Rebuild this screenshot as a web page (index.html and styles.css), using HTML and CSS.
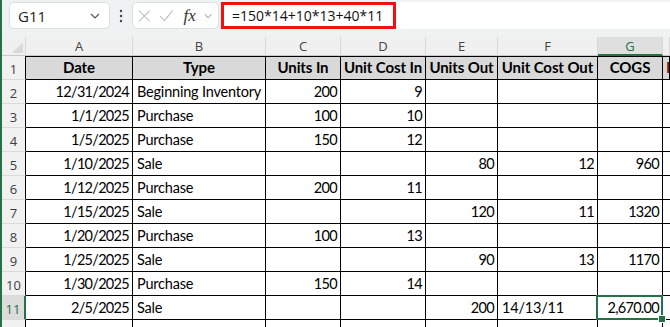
FILE: index.html
```html
<!DOCTYPE html>
<html lang="en">
<head>
    <meta charset="UTF-8">
    <meta name="viewport" content="width=device-width, initial-scale=1.0">
    <title>FIFO COGS</title>
    <link rel="stylesheet" href="styles.css">
</head>
<body>
    <div class="window">
        <div class="toolbar">
            <div class="namebox">
                <span>G11</span>
                <svg class="chev" width="10" height="6" viewBox="0 0 10 6"><path d="M1 1l4 4 4-4" fill="none" stroke="#555" stroke-width="1.2"/></svg>
            </div>
            <svg class="dots" width="4" height="14" viewBox="0 0 4 14"><circle cx="2" cy="2" r="1.2" fill="#444"/><circle cx="2" cy="7" r="1.2" fill="#444"/><circle cx="2" cy="12" r="1.2" fill="#444"/></svg>
            <div class="fxbox">
                <svg width="14" height="14" viewBox="0 0 14 14"><path d="M1 1l12 12M13 1L1 13" stroke="#b5b5b5" stroke-width="1.1"/></svg>
                <svg width="16" height="14" viewBox="0 0 16 14"><path d="M1 7l5 5L15 1" fill="none" stroke="#b5b5b5" stroke-width="1.1"/></svg>
                <span class="fx">fx</span>
                <svg class="chev" width="9" height="6" viewBox="0 0 10 6"><path d="M1 1l4 4 4-4" fill="none" stroke="#888" stroke-width="1.2"/></svg>
            </div>
            <div class="formula">
                <span class="mark">=150*14+10*13+40*11</span>
            </div>
        </div>

        <div class="row colheads">
            <div class="corner"><span class="tri"></span></div>
            <div>A</div><div>B</div><div>C</div><div>D</div><div>E</div><div>F</div>
            <div class="active">G</div><div></div>
        </div>

        <div class="row head">
            <div class="rh">1</div>
            <div class="c">Date</div><div class="c">Type</div><div class="c">Units In</div>
            <div class="c">Unit Cost In</div><div class="c">Units Out</div><div class="c">Unit Cost Out</div>
            <div class="c">COGS</div><div class="c cut">P</div>
        </div>

        <div class="row"><div class="rh">2</div><div class="n">12/31/2024</div><div>Beginning Inventory</div><div class="n">200</div><div class="n">9</div><div></div><div></div><div></div><div></div></div>
        <div class="row"><div class="rh">3</div><div class="n">1/1/2025</div><div>Purchase</div><div class="n">100</div><div class="n">10</div><div></div><div></div><div></div><div></div></div>
        <div class="row"><div class="rh">4</div><div class="n">1/5/2025</div><div>Purchase</div><div class="n">150</div><div class="n">12</div><div></div><div></div><div></div><div></div></div>
        <div class="row"><div class="rh">5</div><div class="n">1/10/2025</div><div>Sale</div><div></div><div></div><div class="n">80</div><div class="n">12</div><div class="n">960</div><div></div></div>
        <div class="row"><div class="rh">6</div><div class="n">1/12/2025</div><div>Purchase</div><div class="n">200</div><div class="n">11</div><div></div><div></div><div></div><div></div></div>
        <div class="row"><div class="rh">7</div><div class="n">1/15/2025</div><div>Sale</div><div></div><div></div><div class="n">120</div><div class="n">11</div><div class="n">1320</div><div></div></div>
        <div class="row"><div class="rh">8</div><div class="n">1/20/2025</div><div>Purchase</div><div class="n">100</div><div class="n">13</div><div></div><div></div><div></div><div></div></div>
        <div class="row"><div class="rh">9</div><div class="n">1/25/2025</div><div>Sale</div><div></div><div></div><div class="n">90</div><div class="n">13</div><div class="n">1170</div><div></div></div>
        <div class="row"><div class="rh">10</div><div class="n">1/30/2025</div><div>Purchase</div><div class="n">150</div><div class="n">14</div><div></div><div></div><div></div><div></div></div>
        <div class="row"><div class="rh sel">11</div><div class="n">2/5/2025</div><div>Sale</div><div></div><div></div><div class="n">200</div><div>14/13/11</div><div class="n picked">2,670.00</div><div></div></div>
        <div class="row"><div class="rh">12</div><div></div><div></div><div></div><div></div><div></div><div></div><div></div><div></div></div>
    </div>
</body>
</html>
```

FILE: styles.css
```css
body {
    margin: 0;
    overflow: hidden;
    background: #fff;
}
.window {
    border-left: 2px solid #217346;
    height: 327px;
    overflow: hidden;
}
.toolbar {
    display: flex;
    align-items: center;
    height: 37px;
    padding: 0 0 6px 7px;
    box-sizing: border-box;
    background: #eef2f2;
    font-family: "Open Sans", sans-serif;
}
.namebox {
    display: flex;
    align-items: center;
    justify-content: space-between;
    width: 101px;
    height: 27px;
    box-sizing: border-box;
    padding: 0 9px 0 8px;
    background: #fff;
    border: 1px solid #dcdfdf;
    border-radius: 5px;
    font-size: 15px;
    color: #222;
}
.dots {
    margin: 0 9px 0 9px;
}
.fxbox {
    display: flex;
    align-items: center;
    gap: 8px;
    width: 87px;
    height: 27px;
    box-sizing: border-box;
    padding: 0 6px 0 5px;
    background: #fff;
    border: 1px solid #dcdfdf;
    border-radius: 5px;
}
.fx {
    font-family: "Liberation Serif", serif;
    font-style: italic;
    font-size: 17px;
    color: #333;
    margin-left: 2px;
}
.formula {
    flex: 1;
    height: 27px;
    margin-left: 2px;
    background: #fff;
    display: flex;
}
.mark {
    border: 3px solid #ee1111;
    padding: 0 10px 0 8px;
    font-size: 14px;
    line-height: 21px;
    color: #111;
}
.row {
    display: grid;
    grid-template-columns: 24px 107px 133px 75px 85px 72px 100px 65px 1fr;
    height: 24px;
    font-family: Lato, sans-serif;
    font-size: 14.5px;
    letter-spacing: -0.2px;
    color: #000;
}
.row > div {
    box-sizing: border-box;
    border-right: 1px solid #000;
    border-bottom: 1px solid #000;
    display: flex;
    align-items: flex-end;
    padding: 0 4px 3px 4px;
    white-space: nowrap;
    overflow: hidden;
}
.row > .n {
    justify-content: flex-end;
    padding-right: 3px;
    letter-spacing: -0.7px;
}
.row > .rh {
    background: #f1f1f1;
    border-right: 1px solid #000;
    border-bottom: 1px solid #dadada;
    justify-content: center;
    align-items: center;
    padding: 2px 0 0 0;
    font-family: "Open Sans", sans-serif;
    font-size: 13px;
    letter-spacing: 0;
    color: #3d3d3d;
}
.row > .rh.sel {
    background: #dcdcdc;
    color: #217346;
    border-right: 2px solid #217346;
}
.colheads {
    height: 19px;
    background: #f0f0f0;
    font-family: "Open Sans", sans-serif;
    font-size: 13px;
    letter-spacing: 0;
}
.colheads > div {
    border-right: 1px solid #d8d8d8;
    border-bottom: 1px solid #c8c8c8;
    justify-content: center;
    align-items: center;
    padding: 0;
    color: #444;
}
.colheads > .active {
    background: #dfdfdf;
    color: #217346;
    border-bottom: 2px solid #217346;
}
.corner {
    position: relative;
}
.tri {
    position: absolute;
    right: 2px;
    bottom: 2px;
    width: 0;
    height: 0;
    border-left: 11px solid transparent;
    border-bottom: 11px solid #dadada;
}
.head > div {
    border-top: 1px solid #000;
}
.head > .c {
    background: #d9d9d9;
    font-weight: bold;
    font-size: 15px;
    letter-spacing: -0.1px;
    justify-content: center;
    padding: 0 0 3px 0;
}
.head > .cut {
    justify-content: flex-start;
    padding-left: 3px;
    color: #7a1a1a;
}
.head > .rh {
    border-top: none;
    border-bottom: 1px solid #dadada;
}
.picked {
    position: relative;
    overflow: visible !important;
}
.picked::after {
    content: "";
    position: absolute;
    left: -2px;
    top: -1px;
    right: -1px;
    bottom: -1px;
    border: 2px solid #217346;
}
.picked::before {
    content: "";
    position: absolute;
    right: -4px;
    bottom: -4px;
    width: 6px;
    height: 6px;
    background: #217346;
    border: 1px solid #fff;
    z-index: 1;
}
```
